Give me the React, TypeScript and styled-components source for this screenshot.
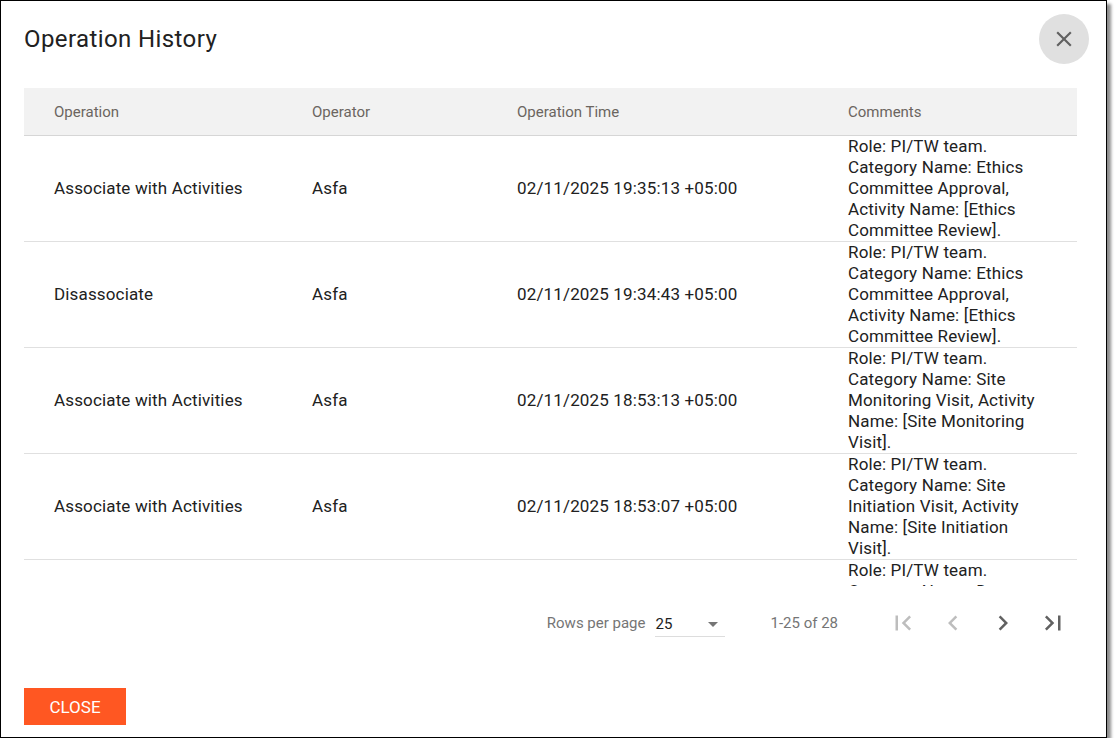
import React from "react";
import styled, { createGlobalStyle } from "styled-components";

const Global = createGlobalStyle`
  html, body { margin: 0; padding: 0; background: #fff; font-family: Roboto, "Noto Sans", sans-serif; }
`;

const Dialog = styled.div`
  position: relative;
  box-sizing: border-box;
  width: 1107px;
  height: 738px;
  border: 1px solid #000;
  background: #fff;
  box-shadow: 4px 4px 3px rgba(0,0,0,0.45);
  padding: 0 28px 0 23px;
  display: flex;
  flex-direction: column;
`;

const Header = styled.div`
  height: 87px;
  display: flex;
  align-items: flex-start;
  justify-content: space-between;
`;

const Title = styled.h2`
  margin: 24px 0 0;
  font-size: 24px;
  font-weight: 400;
  color: #212121;
  letter-spacing: 0.4px;
`;

const CloseIcon = styled.button`
  position: absolute;
  right: 17px;
  top: 13px;
  width: 50px;
  height: 50px;
  border-radius: 50%;
  border: none;
  background: #e0e0e0;
  display: flex;
  align-items: center;
  justify-content: center;
  padding: 0;
`;

const Scroll = styled.div`
  height: 498px;
  overflow: hidden;
`;

const Table = styled.table`
  width: 1053px;
  border-collapse: collapse;
  table-layout: fixed;
`;

const Th = styled.th<{ w: number }>`
  width: ${p => p.w}px;
  height: 47px;
  background: #f2f2f2;
  border-bottom: 1px solid #d6d6d6;
  text-align: left;
  font-size: 15px;
  font-weight: 400;
  color: #6b6560;
  padding: 0;
  &:first-child { padding-left: 30px; }
`;

const Td = styled.td`
  height: 105px;
  padding: 0;
  border-bottom: 1px solid #e0e0e0;
  font-size: 17px;
  letter-spacing: 0.15px;
  line-height: 21px;
  color: #212121;
  vertical-align: middle;
  &:first-child { padding-left: 30px; }
`;

const Comment = styled.div`
  width: 196px;
`;

const Pager = styled.div`
  height: 74px;
  display: flex;
  align-items: center;
  justify-content: flex-end;
  font-size: 15px;
  color: #757575;
`;

const Select = styled.div`
  margin-left: 10px;
  width: 70px;
  height: 28px;
  border-bottom: 1px solid #ddd;
  display: flex;
  align-items: center;
  justify-content: space-between;
  color: #212121;
  font-size: 15px;
  box-sizing: border-box;
  padding-top: 2px;
`;

const Count = styled.span`
  margin-left: 45px;
  margin-right: 40px;
`;

const NavBtn = styled.div`
  width: 50px;
  height: 40px;
  display: flex;
  align-items: center;
  justify-content: center;
`;

const Footer = styled.div`
  flex: 1;
  display: flex;
  align-items: flex-start;
  padding-top: 28px;
`;

const CloseBtn = styled.button`
  width: 102px;
  height: 37px;
  background: #ff5722;
  color: #fff;
  border: none;
  font-family: Roboto, sans-serif;
  font-size: 17px;
  padding: 0;
`;

const rows = [
  ["Associate with Activities", "02/11/2025 19:35:13 +05:00", "Role: PI/TW team. Category Name: Ethics Committee Approval, Activity Name: [Ethics Committee Review]."],
  ["Disassociate", "02/11/2025 19:34:43 +05:00", "Role: PI/TW team. Category Name: Ethics Committee Approval, Activity Name: [Ethics Committee Review]."],
  ["Associate with Activities", "02/11/2025 18:53:13 +05:00", "Role: PI/TW team. Category Name: Site Monitoring Visit, Activity Name: [Site Monitoring Visit]."],
  ["Associate with Activities", "02/11/2025 18:53:07 +05:00", "Role: PI/TW team. Category Name: Site Initiation Visit, Activity Name: [Site Initiation Visit]."],
  ["Associate with Activities", "02/11/2025 18:40:01 +05:00", "Role: PI/TW team. Category Name: Data Management, Activity Name: [Data Entry Review Visit]."],
];

const Chev = ({ d, c }: { d: string; c: string }) => (
  <svg width="30" height="30" viewBox="0 0 24 24" fill={c}><path d={d} /></svg>
);

export default function App() {
  return (
    <>
      <Global />
      <Dialog>
        <Header>
          <Title>Operation History</Title>
          <CloseIcon>
            <svg width="26" height="26" viewBox="0 0 24 24" fill="#616161"><path d="M19 6.41 17.59 5 12 10.59 6.41 5 5 6.41 10.59 12 5 17.59 6.41 19 12 13.41 17.59 19 19 17.59 13.41 12z" /></svg>
          </CloseIcon>
        </Header>
        <Scroll>
          <Table>
            <thead>
              <tr>
                <Th w={258}>Operation</Th>
                <Th w={205}>Operator</Th>
                <Th w={331}>Operation Time</Th>
                <Th w={229}>Comments</Th>
              </tr>
            </thead>
            <tbody>
              {rows.map((r, i) => (
                <tr key={i}>
                  <Td>{r[0]}</Td>
                  <Td>Asfa</Td>
                  <Td>{r[1]}</Td>
                  <Td><Comment>{r[2]}</Comment></Td>
                </tr>
              ))}
            </tbody>
          </Table>
        </Scroll>
        <Pager>
          <span>Rows per page</span>
          <Select>
            <span>25</span>
            <svg width="24" height="24" viewBox="0 0 24 24" fill="#757575"><path d="M7 10l5 5 5-5z" /></svg>
          </Select>
          <Count>1-25 of 28</Count>
          <NavBtn><Chev c="#bdbdbd" d="M18.41 16.59 13.82 12l4.59-4.59L17 6l-6 6 6 6zM6 6h2v12H6z" /></NavBtn>
          <NavBtn><Chev c="#bdbdbd" d="M15.41 7.41 14 6l-6 6 6 6 1.41-1.41L10.83 12z" /></NavBtn>
          <NavBtn><Chev c="#616161" d="M10 6 8.59 7.41 13.17 12l-4.58 4.59L10 18l6-6z" /></NavBtn>
          <NavBtn><Chev c="#616161" d="M5.59 7.41 10.18 12l-4.59 4.59L7 18l6-6-6-6zM16 6h2v12h-2z" /></NavBtn>
        </Pager>
        <Footer>
          <CloseBtn>CLOSE</CloseBtn>
        </Footer>
      </Dialog>
    </>
  );
}
